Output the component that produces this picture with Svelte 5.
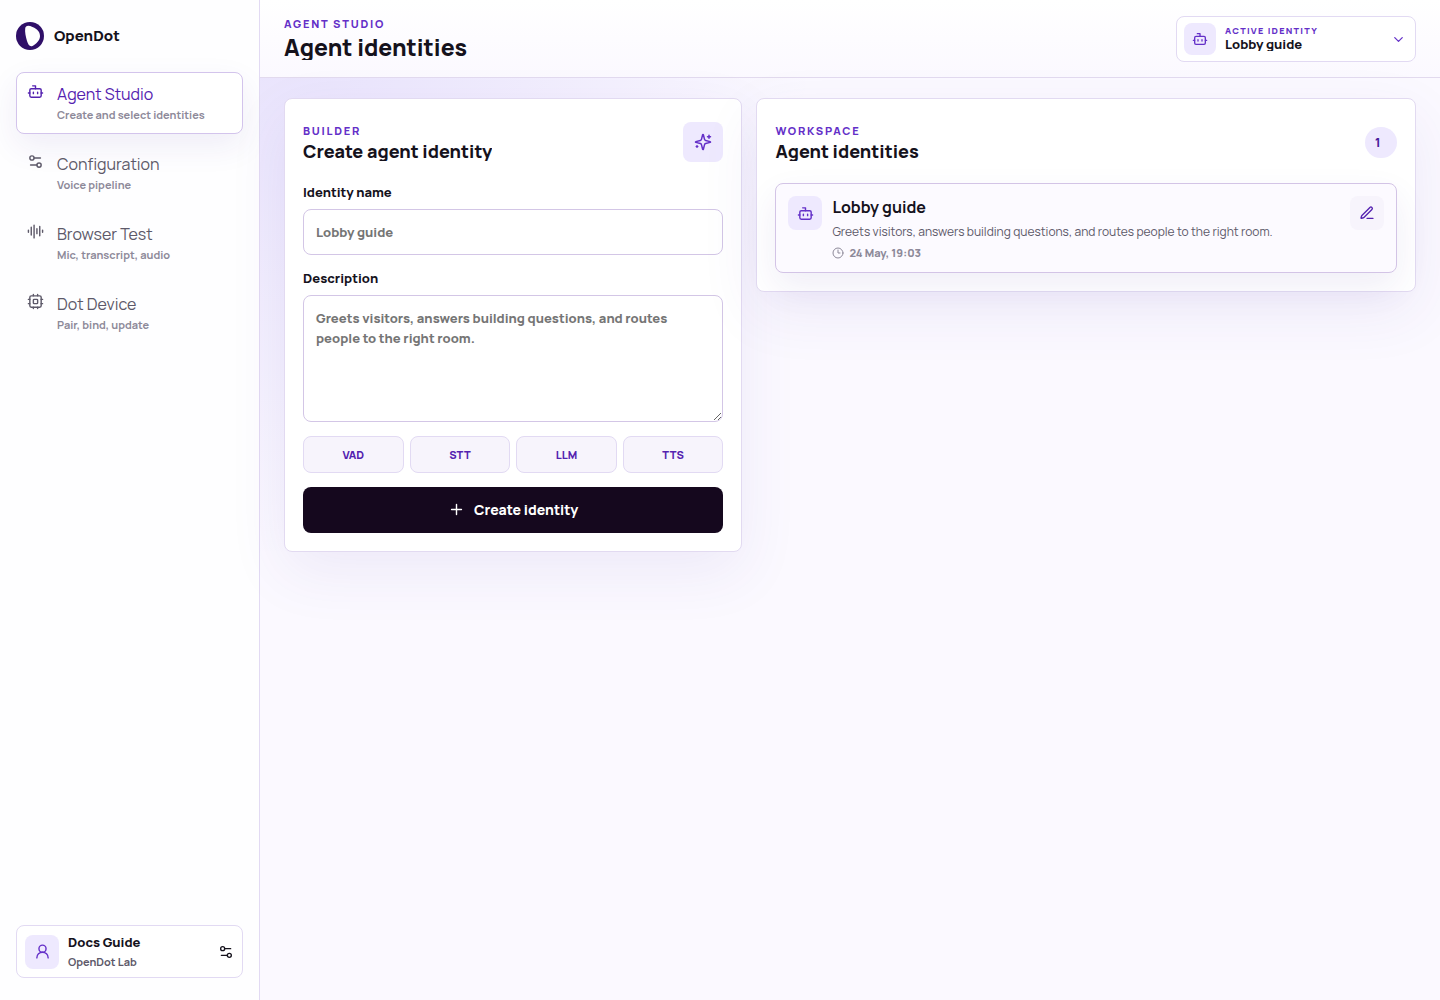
<script>
  const navItems = [
    { title: 'Agent Studio', note: 'Create and select identities', icon: 'bot', active: true },
    { title: 'Configuration', note: 'Voice pipeline', icon: 'settings' },
    { title: 'Browser Test', note: 'Mic, transcript, audio', icon: 'audio' },
    { title: 'Dot Device', note: 'Pair, bind, update', icon: 'cpu' }
  ];
  const stages = ['VAD', 'STT', 'LLM', 'TTS'];
  const identities = [
    {
      name: 'Lobby guide',
      description: 'Greets visitors, answers building questions, and routes people to the right room.',
      updated: '24 May, 19:03'
    }
  ];
  let name = $state('');
  let description = $state('');
</script>

{#snippet icon(kind, size)}
  <svg width={size} height={size} viewBox="0 0 24 24" fill="none" stroke="currentColor" stroke-width="2" stroke-linecap="round" stroke-linejoin="round" aria-hidden="true">
    {#if kind === 'bot'}
      <path d="M12 8V4H8" /><rect width="16" height="12" x="4" y="8" rx="2" /><path d="M2 14h2M20 14h2M15 13v2M9 13v2" />
    {:else if kind === 'settings'}
      <path d="M14 17H5M19 7h-9" /><circle cx="17" cy="17" r="3" /><circle cx="7" cy="7" r="3" />
    {:else if kind === 'audio'}
      <path d="M2 10v3M6 6v11M10 3v18M14 8v7M18 5v13M22 10v3" />
    {:else if kind === 'cpu'}
      <rect x="4" y="4" width="16" height="16" rx="2" /><rect x="9" y="9" width="6" height="6" rx="1" /><path d="M15 2v2M15 20v2M2 15h2M2 9h2M20 15h2M20 9h2M9 2v2M9 20v2" />
    {:else if kind === 'user'}
      <circle cx="12" cy="8" r="5" /><path d="M20 21a8 8 0 0 0-16 0" />
    {:else if kind === 'chevron'}
      <path d="m6 9 6 6 6-6" />
    {:else if kind === 'sparkles'}
      <path d="M9.937 15.500A2 2 0 0 0 8.500 14.063l-6.135-1.582a.5.5 0 0 1 0-.962L8.500 9.936A2 2 0 0 0 9.937 8.500l1.582-6.135a.5.5 0 0 1 .963 0L14.063 8.500A2 2 0 0 0 15.500 9.937l6.135 1.581a.5.5 0 0 1 0 .964L15.500 14.063a2 2 0 0 0-1.437 1.437l-1.582 6.135a.5.5 0 0 1-.963 0z" /><path d="M20 3v4M22 5h-4M4 17v2M5 18H3" />
    {:else if kind === 'plus'}
      <path d="M5 12h14M12 5v14" />
    {:else if kind === 'pen'}
      <path d="M12 20h9" /><path d="M16.376 3.622a1 1 0 0 1 3.002 3.002L7.368 18.635a2 2 0 0 1-.855.506l-2.872.838a.5.5 0 0 1-.620-.620l.838-2.872a2 2 0 0 1 .506-.854z" />
    {:else if kind === 'clock'}
      <circle cx="12" cy="12" r="10" /><path d="M12 6v6h4" />
    {/if}
  </svg>
{/snippet}

<div class="shell">
  <aside>
    <div class="brand">
      <svg width="28" height="28" viewBox="0 0 28 28" aria-hidden="true">
        <circle cx="14" cy="14" r="14" fill="#2f0f68" />
        <path d="M9.200 6.500C9.500 3.400 12.500 3.200 16.500 5C21.500 7.200 24.200 10 24 14.500C23.800 18.500 20 22.300 16.500 24C13.500 25.200 12.200 22.500 11 19C9.800 15 8.700 10 9.200 6.500Z" fill="#fff" />
      </svg>
      <span>OpenDot</span>
    </div>
    <nav aria-label="Main">
      {#each navItems as item}
        <a href="#{item.icon}" class="nav-item" class:active={item.active}>
          {@render icon(item.icon, 17)}
          <span class="nav-text">
            <span class="nav-title">{item.title}</span>
            <span class="nav-note">{item.note}</span>
          </span>
        </a>
      {/each}
    </nav>
    <button class="account">
      <span class="tile">{@render icon('user', 17)}</span>
      <span class="account-text">
        <strong>Docs Guide</strong>
        <span>OpenDot Lab</span>
      </span>
      {@render icon('settings', 16)}
    </button>
  </aside>

  <div class="main">
    <header>
      <div>
        <p class="eyebrow">Agent Studio</p>
        <h1>Agent identities</h1>
      </div>
      <button class="picker">
        <span class="tile small">{@render icon('bot', 16)}</span>
        <span class="picker-text">
          <span class="eyebrow tiny">Active identity</span>
          <strong>Lobby guide</strong>
        </span>
        {@render icon('chevron', 15)}
      </button>
    </header>

    <main>
      <section class="panel">
        <div class="panel-head">
          <div>
            <p class="eyebrow">Builder</p>
            <h2>Create agent identity</h2>
          </div>
          <span class="tile large">{@render icon('sparkles', 18)}</span>
        </div>
        <form onsubmit={(e) => e.preventDefault()}>
          <div class="field">
            <label for="identity-name">Identity name</label>
            <input id="identity-name" type="text" placeholder="Lobby guide" bind:value={name} />
          </div>
          <div class="field">
            <label for="identity-description">Description</label>
            <textarea id="identity-description" placeholder="Greets visitors, answers building questions, and routes people to the right room." bind:value={description}></textarea>
          </div>
          <div class="stages">
            {#each stages as stage}
              <span>{stage}</span>
            {/each}
          </div>
          <button class="create" type="submit">{@render icon('plus', 17)}Create identity</button>
        </form>
      </section>

      <section class="panel">
        <div class="panel-head">
          <div>
            <p class="eyebrow">Workspace</p>
            <h2>Agent identities</h2>
          </div>
          <span class="count">{identities.length}</span>
        </div>
        {#each identities as identity}
          <article>
            <span class="tile">{@render icon('bot', 17)}</span>
            <div class="identity-text">
              <h3>{identity.name}</h3>
              <p>{identity.description}</p>
              <time>{@render icon('clock', 12)}{identity.updated}</time>
            </div>
            <button class="edit" aria-label="Edit {identity.name}">{@render icon('pen', 16)}</button>
          </article>
        {/each}
      </section>
    </main>
  </div>
</div>

<style>
  :global(body) {
    margin: 0;
    background: #fbf9ff;
  }
  .shell {
    display: grid;
    grid-template-columns: 260px minmax(0, 1fr);
    min-height: 100vh;
    color: #15121c;
    font-family: Manrope, Inter, sans-serif;
    font-size: 13px;
  }
  .shell * {
    box-sizing: border-box;
  }
  svg {
    flex: none;
    display: block;
  }
  p, h1, h2, h3 {
    margin: 0;
  }
  button, input, textarea {
    font: inherit;
    color: inherit;
  }
  button {
    cursor: pointer;
  }
  aside {
    display: flex;
    flex-direction: column;
    gap: 22px;
    padding: 22px 16px;
    border-right: 1px solid #e2daf3;
    background: #fefeff;
  }
  .brand {
    display: flex;
    align-items: center;
    gap: 10px;
    font-size: 15px;
    line-height: 28px;
    font-weight: 800;
  }
  nav {
    display: grid;
    gap: 8px;
  }
  .nav-item {
    display: flex;
    gap: 13px;
    padding: 10px;
    border: 1px solid transparent;
    border-radius: 8px;
    color: #5d5969;
    text-decoration: none;
  }
  .nav-item.active {
    border-color: #d3c4ec;
    background: #fff;
    color: #5422b0;
    box-shadow: 0 12px 32px rgba(70, 35, 150, 0.08);
  }
  .nav-text {
    display: grid;
    gap: 2px;
  }
  .nav-title {
    font-size: 16px;
    line-height: 22px;
    font-weight: 400;
  }
  .nav-note {
    font-size: 11px;
    line-height: 16px;
    font-weight: 700;
    color: #8d8999;
  }
  .tile {
    flex: none;
    display: grid;
    place-items: center;
    width: 34px;
    height: 34px;
    border-radius: 8px;
    background: #eee9fe;
    color: #6430c8;
  }
  .tile.small {
    width: 32px;
    height: 32px;
  }
  .tile.large {
    width: 40px;
    height: 40px;
  }
  .account {
    display: flex;
    align-items: center;
    gap: 9px;
    margin-top: auto;
    padding: 7px 8px;
    border: 1px solid #e2daf3;
    border-radius: 8px;
    background: #fff;
    text-align: left;
  }
  .account-text {
    flex: 1;
    display: grid;
    gap: 1px;
    font-size: 11px;
    line-height: 17px;
    font-weight: 700;
    color: #5d5969;
  }
  .account-text strong {
    font-size: 13px;
    line-height: 19px;
    font-weight: 800;
    color: #15121c;
  }
  .main {
    min-width: 0;
    background:
      radial-gradient(circle at 0 0, rgba(110, 80, 235, 0.14), transparent 560px),
      #fbf9ff;
  }
  header {
    display: flex;
    align-items: flex-start;
    justify-content: space-between;
    gap: 16px;
    padding: 16px 24px 15px;
    border-bottom: 1px solid #e2daee;
    background: linear-gradient(#fff, #fbf9ff);
  }
  .eyebrow {
    font-size: 11px;
    line-height: 16px;
    font-weight: 800;
    letter-spacing: 0.16em;
    text-transform: uppercase;
    color: #6430c8;
  }
  .eyebrow.tiny {
    font-size: 9px;
    line-height: 12px;
    letter-spacing: 0.14em;
  }
  h1 {
    overflow: hidden;
    margin-top: 3px;
    font-size: 23px;
    line-height: 25px;
    font-weight: 800;
  }
  h2 {
    overflow: hidden;
    margin-top: 3px;
    font-size: 18px;
    line-height: 19px;
    font-weight: 800;
  }
  .picker {
    display: flex;
    align-items: center;
    gap: 9px;
    width: 240px;
    padding: 6px 9px 6px 7px;
    border: 1px solid #e2daf3;
    border-radius: 8px;
    background: #fff;
    color: #6430c8;
    text-align: left;
  }
  .picker-text {
    flex: 1;
    display: grid;
    padding-bottom: 2px;
  }
  .picker-text strong {
    overflow: hidden;
    font-size: 13px;
    line-height: 14px;
    font-weight: 800;
    color: #15121c;
  }
  main {
    display: grid;
    grid-template-columns: minmax(0, 41fr) minmax(0, 59fr);
    align-items: start;
    gap: 14px;
    padding: 20px 24px;
  }
  .panel {
    padding: 18px;
    border: 1px solid #e2daf1;
    border-radius: 8px;
    background: #fff;
    box-shadow: 0 20px 60px rgba(75, 50, 170, 0.08);
  }
  .panel-head {
    display: flex;
    align-items: center;
    justify-content: space-between;
    min-height: 50px;
    margin-bottom: 16px;
  }
  .count {
    width: 32px;
    padding: 0 10px;
    border-radius: 16px;
    background: #eee9fe;
    color: #4a1c9c;
    font-size: 12px;
    line-height: 31px;
    font-weight: 800;
  }
  form {
    display: grid;
    gap: 14px;
  }
  .field {
    display: grid;
    gap: 8px;
    font-size: 13px;
    font-weight: 800;
  }
  label {
    line-height: 18px;
  }
  input, textarea {
    display: block;
    width: 100%;
    padding: 12px;
    border: 1px solid #d3c6e6;
    border-radius: 8px;
    outline: none;
    background: #fff;
    line-height: 20px;
    font-weight: 800;
  }
  input {
    height: 46px;
  }
  textarea {
    height: 127px;
    resize: vertical;
  }
  input::placeholder, textarea::placeholder {
    color: #757575;
  }
  .stages {
    display: grid;
    grid-template-columns: repeat(4, 1fr);
    gap: 6px;
  }
  .stages span {
    border: 1px solid #e2daf3;
    border-radius: 8px;
    background: #f7f4fc;
    color: #5422b0;
    font-size: 11px;
    line-height: 35px;
    font-weight: 800;
    text-align: center;
  }
  .create {
    display: flex;
    align-items: center;
    justify-content: center;
    gap: 9px;
    height: 46px;
    padding: 0 0 2px;
    border: 0;
    border-radius: 8px;
    background: #15081e;
    color: #fff;
    font-size: 14px;
    font-weight: 800;
  }
  article {
    display: flex;
    align-items: flex-start;
    gap: 10px;
    padding: 12px;
    border: 1px solid #d3c4e6;
    border-radius: 8px;
    background: #fcfaff;
    box-shadow: 0 14px 34px rgba(70, 35, 150, 0.08);
  }
  .identity-text {
    flex: 1;
    min-width: 0;
  }
  h3 {
    font-size: 16px;
    line-height: 22px;
    font-weight: 700;
  }
  .identity-text p {
    margin-top: 5px;
    font-size: 12px;
    line-height: 18px;
    font-weight: 400;
    color: #5d5969;
  }
  time {
    display: flex;
    align-items: center;
    gap: 5px;
    margin-top: 4px;
    font-size: 11px;
    line-height: 15px;
    font-weight: 800;
    color: #8d8999;
  }
  .edit {
    display: grid;
    place-items: center;
    width: 34px;
    height: 34px;
    padding: 0;
    border: 0;
    border-radius: 8px;
    background: #f7f4fc;
    color: #5422b0;
  }
</style>
